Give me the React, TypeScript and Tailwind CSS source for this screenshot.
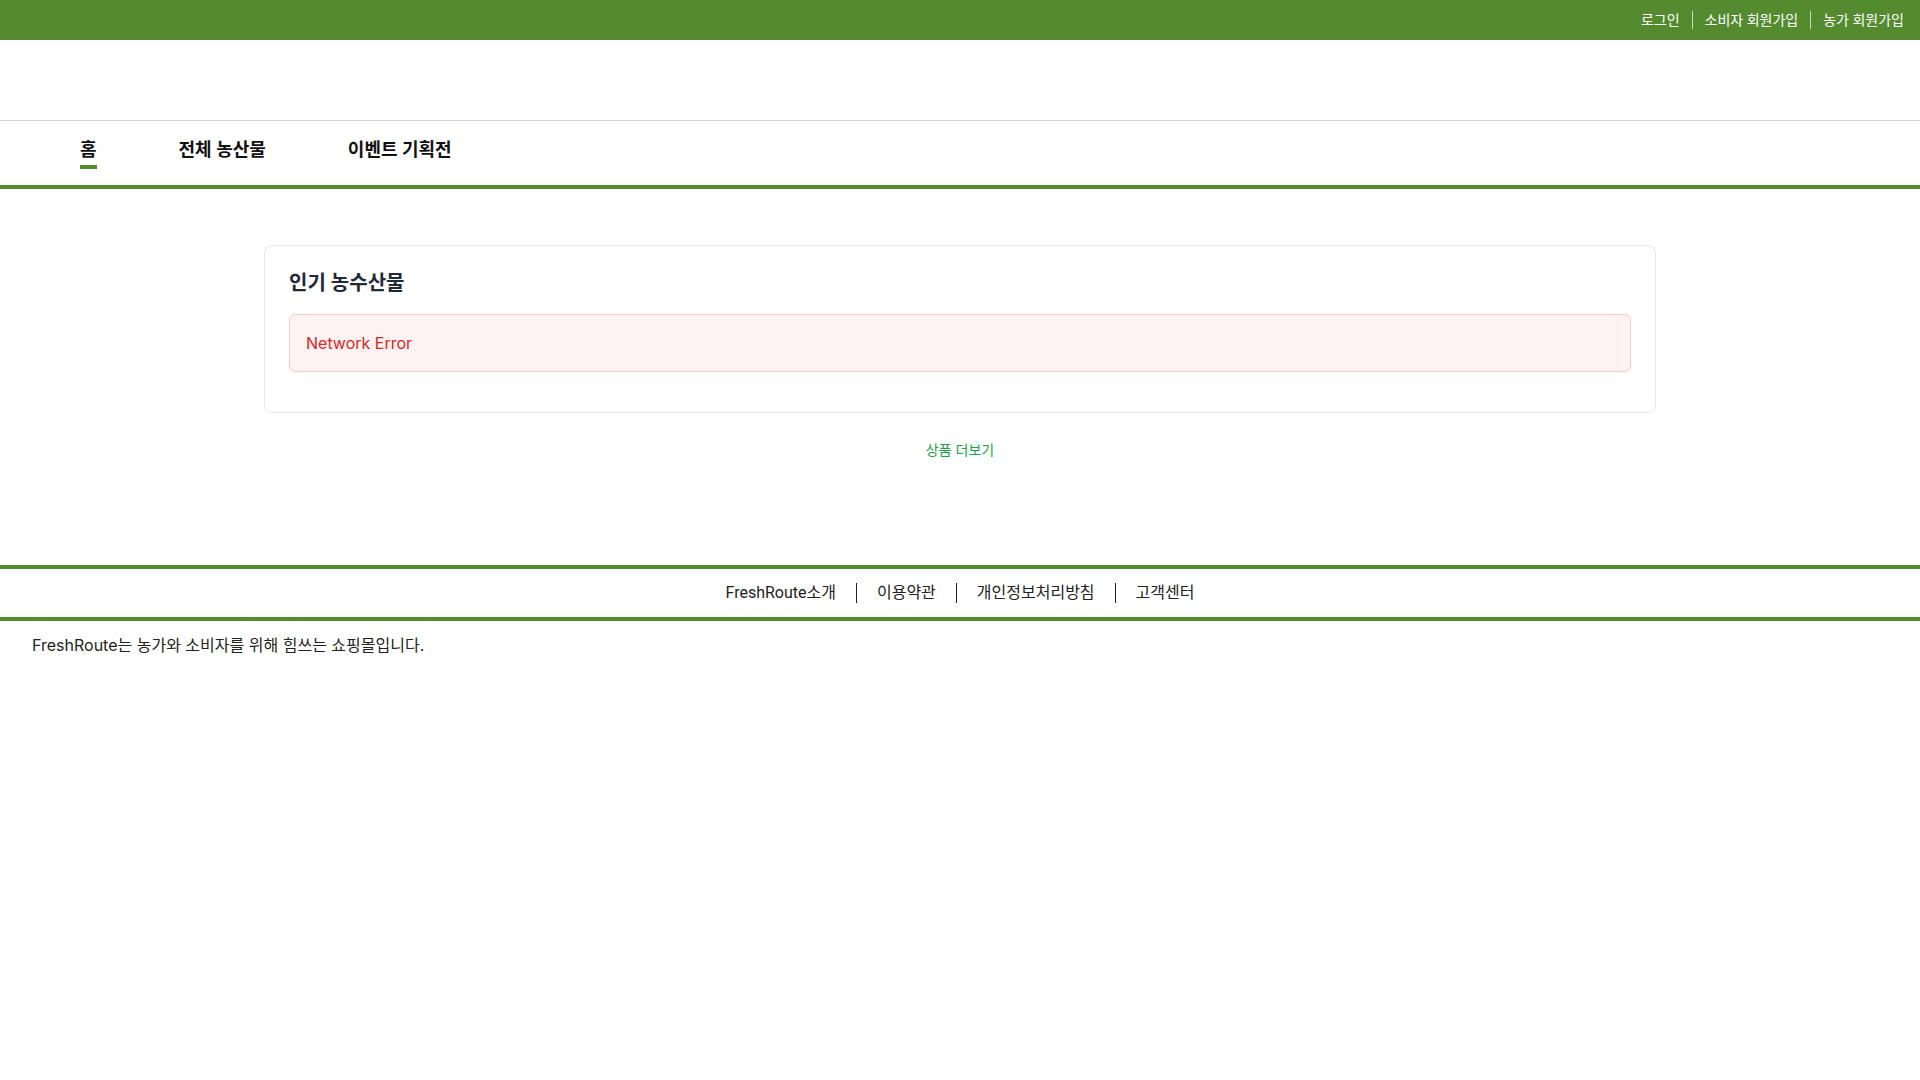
import React from "react";

const fontInter = { fontFamily: 'Inter, "Noto Sans CJK KR", sans-serif' };

export default function App() {
  return (
    <div className="min-h-screen bg-white text-[#222]" style={{ fontFamily: 'Roboto, "Noto Sans CJK KR", sans-serif' }}>
      {/* top bar */}
      <div className="h-10 bg-[#558b2f] flex items-center justify-end pr-[4px]">
        <a className="px-3 text-sm text-white leading-5">로그인</a>
        <span className="w-px h-[18px] bg-white/70" />
        <a className="px-3 text-sm text-white leading-5">소비자 회원가입</a>
        <span className="w-px h-[18px] bg-white/70" />
        <a className="px-3 text-sm text-white leading-5">농가 회원가입</a>
      </div>

      {/* header */}
      <div className="h-[81px] border-b border-[#d1d5db]" />

      {/* nav */}
      <nav className="flex items-start gap-[82px] pl-20 pt-[15px] pb-4 border-b-4 border-[#558b2f]">
        <div className="flex flex-col">
          <span className="text-lg font-bold leading-7 text-[#111]">홈</span>
          <span className="mt-px h-1 bg-[#558b2f]" />
        </div>
        <span className="text-lg font-bold leading-7 text-[#111]">전체 농산물</span>
        <span className="text-lg font-bold leading-7 text-[#111]">이벤트 기획전</span>
      </nav>

      {/* main */}
      <main className="pt-14 pb-[101px]" style={fontInter}>
        <div className="max-w-[1440px] mx-auto px-6">
          <section className="border border-[#e5e7eb] rounded-lg pt-[23px] px-6 pb-10 bg-white">
            <h2 className="text-xl font-semibold leading-7 text-[#1f2937] mb-[17px]">인기 농수산물</h2>
            <div className="border border-[#fecaca] bg-[#fef2f2] rounded-md p-4 text-base leading-6 text-[#dc2626]">
              Network Error
            </div>
          </section>
          <div className="mt-[23px] flex justify-center">
            <a className="py-1 text-sm leading-5 text-[#16a34a]">상품 더보기</a>
          </div>
        </div>
      </main>

      {/* footer */}
      <footer>
        <div className="border-t-4 border-b-4 border-[#558b2f] py-3 flex justify-center items-center">
          <a className="text-base leading-6 text-[#222]">FreshRoute소개</a>
          <span className="ml-5 mr-5 w-px h-5 bg-[#222]" />
          <a className="text-base leading-6 text-[#222]">이용약관</a>
          <span className="ml-5 mr-5 w-px h-5 bg-[#222]" />
          <a className="text-base leading-6 text-[#222]">개인정보처리방침</a>
          <span className="ml-5 mr-5 w-px h-5 bg-[#222]" />
          <a className="text-base leading-6 text-[#222]">고객센터</a>
        </div>
        <p className="px-8 pt-3 text-base leading-6 text-[#222]" style={fontInter}>
          FreshRoute는 농가와 소비자를 위해 힘쓰는 쇼핑몰입니다.
        </p>
      </footer>
    </div>
  );
}
